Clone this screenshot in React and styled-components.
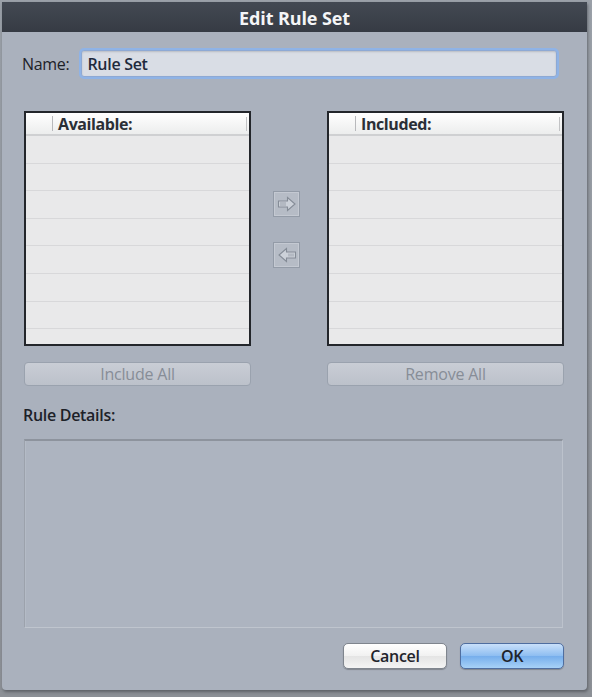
import React from "react";
import styled, { createGlobalStyle } from "styled-components";

const Global = createGlobalStyle`
  html, body { margin: 0; padding: 0; background: #8f9399; }
  body { font-family: "Open Sans", "DejaVu Sans", sans-serif; }
  * { box-sizing: border-box; }
`;

const Page = styled.div`
  width: 592px;
  height: 697px;
  padding: 2px 0 0 2px;
  background: linear-gradient(#9aa0a8, #8c9096);
`;

const Window = styled.div`
  width: 585px;
  height: 688px;
  background: #aab1bd;
  border-radius: 0 0 4px 4px;
  box-shadow: 1px 2px 3px rgba(40, 42, 48, 0.45);
  display: flex;
  flex-direction: column;
  overflow: hidden;
`;

const TitleBar = styled.div`
  height: 30px;
  flex: none;
  background: linear-gradient(#434953, #363b44);
  color: #f4f5f7;
  font-weight: 700;
  font-size: 18px;
  display: flex;
  align-items: center;
  justify-content: center;
  letter-spacing: -0.1px;
  padding-top: 1px;
`;

const Body = styled.div`
  flex: 1;
  padding: 18px 23px 0 20px;
  display: flex;
  flex-direction: column;
  color: #1e2229;
`;

const NameRow = styled.div`
  display: flex;
  align-items: center;
  gap: 12px;
`;

const Label = styled.span`
  font-size: 16px;
  font-weight: ${(p) => (p.$bold ? 600 : 400)};
  color: #1d2128;
  letter-spacing: -0.3px;
`;

const NameInput = styled.div`
  flex: 1;
  margin-right: 7px;
  height: 27px;
  border-radius: 3px;
  background: #d9dde5;
  border: 1px solid #8ea9d4;
  box-shadow: 0 0 0 2px #8fb3e6, inset 0 1px 2px rgba(0, 0, 0, 0.15);
  display: flex;
  align-items: center;
  padding-left: 5px;
  font-size: 16px;
  font-weight: 600;
  color: #1f2a3c;
  letter-spacing: -0.3px;
`;

const ListsGrid = styled.div`
  margin-top: 34px;
  margin-left: 2px;
  display: grid;
  grid-template-columns: 227px 76px 237px;
  grid-template-rows: 235px 24px;
  row-gap: 16px;
`;

const List = styled.div`
  border: 2px solid #23262b;
  background: #e9e9ea;
  display: flex;
  flex-direction: column;
  overflow: hidden;
`;

const ListHeader = styled.div`
  height: 23px;
  flex: none;
  background: linear-gradient(#ffffff, #eceded);
  border-bottom: 2px solid #cfd0d2;
  display: flex;
  align-items: center;
  font-size: 16px;
  font-weight: 700;
  color: #2b2f36;
  letter-spacing: -0.4px;
  position: relative;
`;

const HeaderSep = styled.span`
  width: 1px;
  height: 15px;
  background: #b8b9bc;
  margin: 0 5px 0 26px;
`;

const HeaderEnd = styled.span`
  position: absolute;
  right: 2px;
  top: 4px;
  width: 1px;
  height: 14px;
  background: #c2c3c5;
`;

const Row = styled.div`
  height: 27.6px;
  flex: none;
  border-bottom: 1px solid #d8d8da;
`;

const ArrowCol = styled.div`
  display: flex;
  flex-direction: column;
  align-items: center;
  padding-top: 80px;
  padding-right: 5px;
  gap: 25px;
`;

const ArrowBtn = styled.div`
  width: 27px;
  height: 26px;
  border: 1px solid #939ba7;
  background: #b6bcc6;
  display: flex;
  align-items: center;
  justify-content: center;
  box-shadow: inset 0 0 0 1px #c4c9d2;
`;

const PushBtn = styled.div`
  height: 24px;
  border-radius: 4px;
  border: 1px solid #9aa2ae;
  background: linear-gradient(#c9cdd5, #bcc1ca);
  color: #878d97;
  font-size: 16px;
  display: flex;
  align-items: center;
  justify-content: center;
  letter-spacing: -0.2px;
`;

const DetailsLabel = styled.div`
  margin-top: 18px;
  padding-left: 1px;
`;

const DetailsBox = styled.div`
  margin: 13px 1px 0 2px;
  height: 189px;
  border-top: 2px solid #8d939d;
  border-left: 1px solid #9ca2ac;
  border-right: 1px solid #bcc2cc;
  border-bottom: 1px solid #bfc5ce;
  background: #adb4c0;
  box-shadow: inset 1px 0 0 #b4bbc6;
`;

const Footer = styled.div`
  margin-top: 15px;
  display: flex;
  justify-content: flex-end;
  gap: 13px;
`;

const DialogBtn = styled.div`
  width: 104px;
  height: 26px;
  border-radius: 5px;
  border: 1px solid ${(p) => (p.$primary ? "#4f6ea0" : "#7f858e")};
  background: ${(p) =>
    p.$primary
      ? "linear-gradient(#c9e0fa, #8dbdf1 50%, #76aeec 51%, #a7d1f7)"
      : "linear-gradient(#ffffff, #f1f1f1 50%, #e4e4e4 51%, #f4f4f4)"};
  box-shadow: 0 1px 1px rgba(0, 0, 0, 0.25);
  display: flex;
  align-items: center;
  justify-content: center;
  font-size: 16px;
  font-weight: 600;
  color: #1f242b;
  letter-spacing: -0.3px;
`;

const RightArrow = () => (
  <svg width="20" height="16" viewBox="0 0 20 16">
    <path d="M1.5 5h9V1.5L18 8l-7.5 6.5V11h-9z" fill="#ccd1d9" stroke="#858c97" strokeWidth="1.1" />
    <path d="M3 7h6M3 9h6" stroke="#959ca7" strokeWidth="0.9" />
  </svg>
);

const LeftArrow = () => (
  <svg width="20" height="16" viewBox="0 0 20 16">
    <path d="M18.5 5h-9V1.5L2 8l7.5 6.5V11h9z" fill="#ccd1d9" stroke="#858c97" strokeWidth="1.1" />
    <path d="M12 6.5v3M14 6.5v3M16 6.5v3" stroke="#959ca7" strokeWidth="0.9" />
  </svg>
);

const rows = Array.from({ length: 8 });

function RuleList({ title }) {
  return (
    <List>
      <ListHeader>
        <HeaderSep />
        {title}
        <HeaderEnd />
      </ListHeader>
      {rows.map((_, i) => (
        <Row key={i} />
      ))}
    </List>
  );
}

export default function App() {
  return (
    <>
      <Global />
      <Page>
        <Window>
          <TitleBar>Edit Rule Set</TitleBar>
          <Body>
            <NameRow>
              <Label>Name:</Label>
              <NameInput>Rule Set</NameInput>
            </NameRow>
            <ListsGrid>
              <RuleList title="Available:" />
              <ArrowCol>
                <ArrowBtn>
                  <RightArrow />
                </ArrowBtn>
                <ArrowBtn>
                  <LeftArrow />
                </ArrowBtn>
              </ArrowCol>
              <RuleList title="Included:" />
              <PushBtn>Include All</PushBtn>
              <div />
              <PushBtn>Remove All</PushBtn>
            </ListsGrid>
            <DetailsLabel>
              <Label $bold>Rule Details:</Label>
            </DetailsLabel>
            <DetailsBox />
            <Footer>
              <DialogBtn>Cancel</DialogBtn>
              <DialogBtn $primary>OK</DialogBtn>
            </Footer>
          </Body>
        </Window>
      </Page>
    </>
  );
}
